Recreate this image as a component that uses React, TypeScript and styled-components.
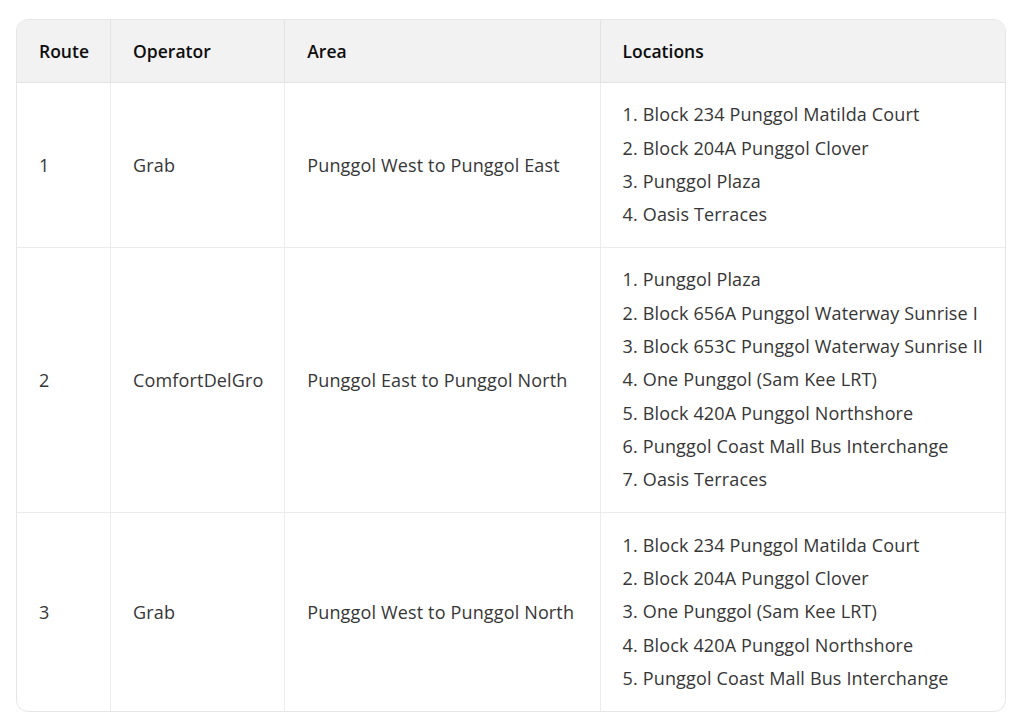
import React from 'react';
import styled, { createGlobalStyle } from 'styled-components';

const GlobalStyle = createGlobalStyle`
  html, body {
    margin: 0;
    padding: 0;
    background: #ffffff;
    font-family: "Open Sans", "Noto Sans", "Liberation Sans", sans-serif;
  }
`;

const Page = styled.div`
  padding: 19px 21px 8px 16px;
`;

const Frame = styled.div`
  border: 1px solid #e6e6e6;
  border-radius: 12px;
  overflow: hidden;
`;

const Table = styled.table`
  width: 100%;
  border-collapse: separate;
  border-spacing: 0;
  table-layout: fixed;
  font-size: 18px;
`;

const Th = styled.th<{ $w: number; $last?: boolean }>`
  width: ${(p) => p.$w}px;
  background: #f2f2f2;
  color: #0d0d0d;
  font-weight: 600;
  font-size: 17.5px;
  text-align: left;
  height: 63px;
  padding: 0 22px;
  box-sizing: border-box;
  border-bottom: 1px solid #e3e3e3;
  border-right: ${(p) => (p.$last ? 'none' : '1px solid #e3e3e3')};
`;

const Row = styled.tr<{ $last?: boolean }>`
  & > td {
    border-bottom: ${(p) => (p.$last ? 'none' : '1px solid #ececec')};
  }
`;

const Td = styled.td<{ $last?: boolean }>`
  color: #363636;
  padding: 15.4px 22px;
  vertical-align: middle;
  letter-spacing: 0.15px;
  border-right: ${(p) => (p.$last ? 'none' : '1px solid #ececec')};
  line-height: 24px;
`;

const List = styled.ol`
  margin: 0;
  padding: 0;
  list-style-position: inside;
`;

const Item = styled.li`
  line-height: 33.33px;
  white-space: nowrap;
`;

type Route = {
  id: string;
  operator: string;
  area: string;
  locations: string[];
};

const routes: Route[] = [
  {
    id: '1',
    operator: 'Grab',
    area: 'Punggol West to Punggol East',
    locations: [
      'Block 234 Punggol Matilda Court',
      'Block 204A Punggol Clover',
      'Punggol Plaza',
      'Oasis Terraces',
    ],
  },
  {
    id: '2',
    operator: 'ComfortDelGro',
    area: 'Punggol East to Punggol North',
    locations: [
      'Punggol Plaza',
      'Block 656A Punggol Waterway Sunrise I',
      'Block 653C Punggol Waterway Sunrise II',
      'One Punggol (Sam Kee LRT)',
      'Block 420A Punggol Northshore',
      'Punggol Coast Mall Bus Interchange',
      'Oasis Terraces',
    ],
  },
  {
    id: '3',
    operator: 'Grab',
    area: 'Punggol West to Punggol North',
    locations: [
      'Block 234 Punggol Matilda Court',
      'Block 204A Punggol Clover',
      'One Punggol (Sam Kee LRT)',
      'Block 420A Punggol Northshore',
      'Punggol Coast Mall Bus Interchange',
    ],
  },
];

export default function App(): JSX.Element {
  return (
    <Page>
      <GlobalStyle />
      <Frame>
        <Table>
          <thead>
            <tr>
              <Th $w={94}>Route</Th>
              <Th $w={174}>Operator</Th>
              <Th $w={315}>Area</Th>
              <Th $w={404} $last>Locations</Th>
            </tr>
          </thead>
          <tbody>
            {routes.map((r, i) => (
              <Row key={i} $last={i === routes.length - 1}>
                <Td>{r.id}</Td>
                <Td>{r.operator}</Td>
                <Td>{r.area}</Td>
                <Td $last>
                  <List>
                    {r.locations.map((l) => (
                      <Item key={l}>{l}</Item>
                    ))}
                  </List>
                </Td>
              </Row>
            ))}
          </tbody>
        </Table>
      </Frame>
    </Page>
  );
}
